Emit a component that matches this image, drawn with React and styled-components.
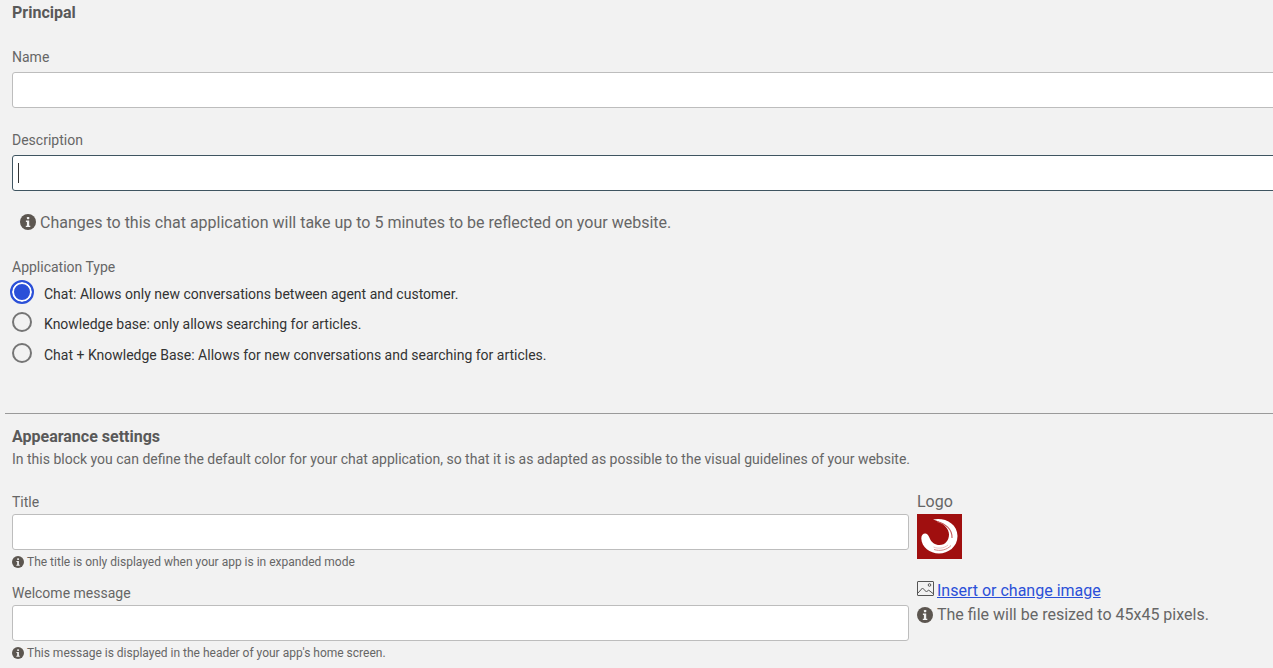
import React from "react";
import styled, { createGlobalStyle } from "styled-components";

const Global = createGlobalStyle`
  html, body { margin: 0; padding: 0; background: #f2f2f2; overflow: hidden; }
  body { font-family: Roboto, "Liberation Sans", sans-serif; color: #666; }
  * { box-sizing: border-box; }
`;

const Page = styled.div`
  width: 1273px;
  height: 668px;
  overflow: hidden;
  background: #f2f2f2;
  display: flex;
  flex-direction: column;
`;

const Section = styled.section`
  padding-left: 12px;
  display: flex;
  flex-direction: column;
`;

const Heading = styled.h2`
  margin: ${(p) => p.$top || 0}px 0 0;
  font-size: 16px;
  line-height: 24px;
  font-weight: 700;
  color: #595959;
`;

const Label = styled.label`
  display: block;
  font-size: 14px;
  line-height: 18px;
  color: #666;
  margin-top: ${(p) => p.$top || 0}px;
`;

const InputBox = styled.div`
  margin-top: ${(p) => p.$top ?? 6}px;
  height: 36px;
  width: ${(p) => (p.$wide ? "1300px" : "897px")};
  background: #fff;
  border: 1px solid ${(p) => (p.$focus ? "#3f5561" : "#bdbdbd")};
  border-radius: 3px;
  display: flex;
  align-items: center;
  padding-left: 5px;
`;

const Caret = styled.span`
  width: 1px;
  height: 20px;
  background: #333;
`;

const Note = styled.div`
  margin: 22px 0 0 8px;
  display: flex;
  align-items: center;
  gap: 4px;
  font-size: 16px;
  line-height: 20px;
  color: #666;
  svg { margin-bottom: 2px; }
`;

const RadioList = styled.div`
  display: flex;
  flex-direction: column;
  margin-top: 3px;
  margin-left: -3px;
`;

const RadioRow = styled.div`
  height: ${(p) => p.$h}px;
  display: flex;
  align-items: center;
  font-size: 14px;
  color: #333;
`;

const RadioSlot = styled.span`
  width: 26px;
  height: 26px;
  margin-right: 9px;
  margin-bottom: 4px;
  display: flex;
  align-items: center;
  justify-content: center;
  flex: none;
`;

const RadioOff = styled.span`
  width: 20px;
  height: 20px;
  border-radius: 50%;
  border: 2px solid #757575;
  background: #f2f2f2;
`;

const RadioOn = styled.span`
  width: 24px;
  height: 24px;
  border-radius: 50%;
  border: 2px solid #2b50d8;
  background: #2b50d8;
  box-shadow: inset 0 0 0 2px #fff;
`;

const Divider = styled.hr`
  margin: 42px 0 0 5px;
  border: 0;
  height: 1px;
  background: #9a9a9a;
  flex: none;
`;

const Intro = styled.p`
  margin: 0;
  font-size: 14px;
  line-height: 20px;
  color: #666;
`;

const Columns = styled.div`
  display: grid;
  grid-template-columns: 897px 1fr;
  column-gap: 8px;
  margin-top: 24px;
`;

const Hint = styled.div`
  margin-top: 4px;
  display: flex;
  align-items: center;
  gap: 3px;
  font-size: 12px;
  line-height: 16px;
  color: #666;
`;

const Side = styled.div`
  display: flex;
  flex-direction: column;
`;

const SideLabel = styled.div`
  font-size: 16px;
  line-height: 18px;
  color: #666;
`;

const LogoBox = styled.div`
  width: 45px;
  height: 45px;
  margin-top: 3px;
  background: #a00f0f;
`;

const LinkRow = styled.div`
  margin-top: 22px;
  display: flex;
  align-items: center;
  gap: 3px;
  font-size: 16px;
  line-height: 20px;
`;

const Anchor = styled.a`
  color: #2b50d8;
  text-decoration: underline;
`;

const SideNote = styled.div`
  margin-top: 4px;
  display: flex;
  align-items: center;
  gap: 4px;
  font-size: 16px;
  line-height: 20px;
  color: #666;
`;

const Info = ({ size }) => (
  <svg width={size} height={size} viewBox="0 0 16 16" style={{ flex: "none" }}>
    <circle cx="8" cy="8" r="8" fill="#5c5650" />
    <rect x="6.9" y="3" width="2.4" height="2.2" rx="0.6" fill="#f2f2f2" />
    <path d="M5.9 6.6h3.3v5.1h1.1v1.3H5.8v-1.3h1.1V7.9h-1z" fill="#f2f2f2" />
  </svg>
);

const ImageIcon = () => (
  <svg width="17" height="15" viewBox="0 0 17 15" fill="none" stroke="#555" strokeWidth="1" style={{ flex: "none", marginTop: -4 }}>
    <rect x="0.5" y="0.5" width="16" height="14" rx="0.5" />
    <circle cx="12.5" cy="4" r="1.3" />
    <path d="M1 12 L5.5 7 L9.5 11 L11.5 9 L16 12.5" />
  </svg>
);

const Logo = () => (
  <svg width="45" height="45" viewBox="0 0 45 45">
    <path
      d="M16 5.500 C27 3 40.500 9 40.500 22 C40.500 33 31 39.500 22 39.500 C13 39.500 4.500 33 4.300 24.500 C4.200 21 6.500 19.300 8.500 19.600 C10.800 20 11.800 22 12.800 24.500 C14.500 28.500 18 31 22.500 31 C28.500 31 32 26 32 20.500 C32 14.500 26.500 8.500 16 5.500 Z"
      fill="#fff"
    />
    <path d="M20 7.500 C28 9.500 35.500 15 35 24" fill="none" stroke="#c65a5a" strokeWidth="1.100" />
    <path d="M17 35.500 C23 37.500 30 36 34 31.500" fill="none" stroke="#d07c7c" strokeWidth="0.900" />
    <path d="M16.500 33 C21 35 27 34.500 31 31" fill="none" stroke="#e7b5b5" strokeWidth="0.800" />
  </svg>
);

export default function App() {
  return (
    <Page>
      <Global />
      <Section>
        <Heading $top={1}>Principal</Heading>
        <Label $top={23}>Name</Label>
        <InputBox $wide />
        <Label $top={23}>Description</Label>
        <InputBox $wide $focus>
          <Caret />
        </InputBox>
        <Note>
          <Info size={16} />
          Changes to this chat application will take up to 5 minutes to be reflected on your website.
        </Note>
        <Label $top={25}>Application Type</Label>
        <RadioList>
          <RadioRow $h={30}>
            <RadioSlot><RadioOn /></RadioSlot>
            Chat: Allows only new conversations between agent and customer.
          </RadioRow>
          <RadioRow $h={30}>
            <RadioSlot><RadioOff /></RadioSlot>
            Knowledge base: only allows searching for articles.
          </RadioRow>
          <RadioRow $h={31.5}>
            <RadioSlot><RadioOff /></RadioSlot>
            Chat + Knowledge Base: Allows for new conversations and searching for articles.
          </RadioRow>
        </RadioList>
      </Section>
      <Divider />
      <Section>
        <Heading $top={11}>Appearance settings</Heading>
        <Intro>In this block you can define the default color for your chat application, so that it is as adapted as possible to the visual guidelines of your website.</Intro>
        <Columns>
          <div>
            <Label>Title</Label>
            <InputBox $top={3} />
            <Hint><Info size={12} />The title is only displayed when your app is in expanded mode</Hint>
            <Label $top={14}>Welcome message</Label>
            <InputBox $top={3} />
            <Hint><Info size={12} />This message is displayed in the header of your app's home screen.</Hint>
          </div>
          <Side>
            <SideLabel>Logo</SideLabel>
            <LogoBox><Logo /></LogoBox>
            <LinkRow><ImageIcon /><Anchor href="#">Insert or change image</Anchor></LinkRow>
            <SideNote><Info size={16} />The file will be resized to 45x45 pixels.</SideNote>
          </Side>
        </Columns>
      </Section>
    </Page>
  );
}
